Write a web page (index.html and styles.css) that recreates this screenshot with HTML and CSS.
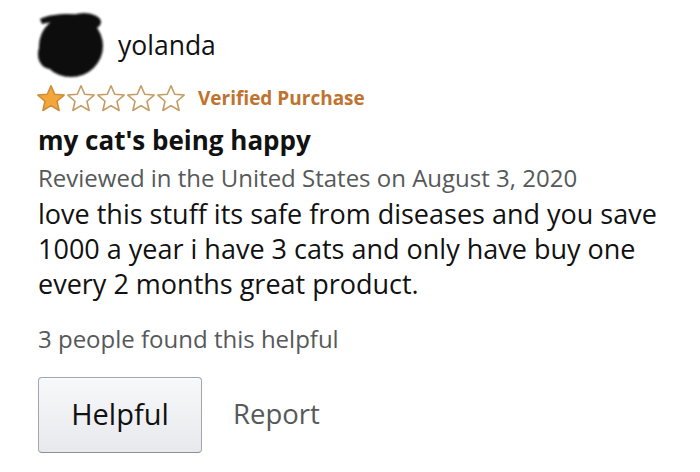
FILE: index.html
```html
<!DOCTYPE html>
<html>
<head>
<meta charset="utf-8">
<link rel="stylesheet" href="styles.css">
</head>
<body>
<div class="review">
  <div class="header">
    <svg class="avatar" width="72" height="70" viewBox="0 0 72 70">
      <defs><filter id="soft" x="-10%" y="-10%" width="120%" height="120%"><feGaussianBlur stdDeviation="1.3"/></filter></defs>
      <g fill="#0a0a0a" filter="url(#soft)">
        <ellipse cx="37" cy="36" rx="32" ry="31"/>
        <ellipse cx="50" cy="12" rx="17" ry="9"/>
        <ellipse cx="16" cy="44" rx="12" ry="15"/>
        <path d="M6 9 C18 3 40 3 58 6 L58 12 C40 10 20 11 8 14 Z"/>
      </g>
    </svg>
    <span class="name">yolanda</span>
  </div>
  <div class="rating">
    <div class="stars">
      <svg class="star" viewBox="0 0 30 27" width="30" height="27"><path class="full" d="M15 0.8 L18.7 9.2 L28.12 10.04 L20.99 16.25 L23.11 25.46 L15 20.6 L6.89 25.46 L9.01 16.25 L1.88 10.04 L11.3 9.2 Z"/></svg>
      <svg class="star" viewBox="0 0 30 27" width="30" height="27"><path class="empty" d="M15 0.8 L18.7 9.2 L28.12 10.04 L20.99 16.25 L23.11 25.46 L15 20.6 L6.89 25.46 L9.01 16.25 L1.88 10.04 L11.3 9.2 Z"/></svg>
      <svg class="star" viewBox="0 0 30 27" width="30" height="27"><path class="empty" d="M15 0.8 L18.7 9.2 L28.12 10.04 L20.99 16.25 L23.11 25.46 L15 20.6 L6.89 25.46 L9.01 16.25 L1.88 10.04 L11.3 9.2 Z"/></svg>
      <svg class="star" viewBox="0 0 30 27" width="30" height="27"><path class="empty" d="M15 0.8 L18.7 9.2 L28.12 10.04 L20.99 16.25 L23.11 25.46 L15 20.6 L6.89 25.46 L9.01 16.25 L1.88 10.04 L11.3 9.2 Z"/></svg>
      <svg class="star" viewBox="0 0 30 27" width="30" height="27"><path class="empty" d="M15 0.8 L18.7 9.2 L28.12 10.04 L20.99 16.25 L23.11 25.46 L15 20.6 L6.89 25.46 L9.01 16.25 L1.88 10.04 L11.3 9.2 Z"/></svg>
    </div>
    <span class="verified">Verified Purchase</span>
  </div>
  <h1 class="title">my cat's being happy</h1>
  <p class="meta">Reviewed in the United States on August 3, 2020</p>
  <p class="body">love this stuff its safe from diseases and you save 1000 a year i have 3 cats and only have buy one every 2 months great product.</p>
  <p class="count">3 people found this helpful</p>
  <div class="actions">
    <button class="helpful">Helpful</button>
    <span class="report">Report</span>
  </div>
</div>
</body>
</html>
```
FILE: styles.css
```css
html, body {
  margin: 0;
  padding: 0;
  background: #ffffff;
}
body {
  font-family: "Open Sans", "Noto Sans", sans-serif;
  color: #111111;
}
.review {
  width: 700px;
  height: 472px;
  padding-left: 38px;
  box-sizing: border-box;
  display: flex;
  flex-direction: column;
  align-items: flex-start;
}
.header {
  display: flex;
  align-items: flex-start;
  margin-top: 10px;
  margin-left: -4px;
  height: 75px;
}
.avatar {
  display: block;
}
.name {
  font-size: 26.5px;
  line-height: 32px;
  margin-top: 19px;
  margin-left: 12px;
  color: #111;
}
.rating {
  display: flex;
  align-items: center;
  height: 26px;
  margin-left: -2px;
}
.stars {
  display: flex;
  width: 152px;
}
.star {
  display: block;
}
.star .full {
  fill: #f3a73b;
  stroke: #cf8d3a;
  stroke-width: 1.6;
  stroke-linejoin: round;
}
.star .empty {
  fill: #ffffff;
  stroke: #c49c63;
  stroke-width: 1.6;
  stroke-linejoin: round;
}
.verified {
  font-size: 19px;
  font-weight: 700;
  line-height: 24px;
  color: #c0722f;
  margin-left: 10px;
}
.title {
  margin: 14px 0 0 0;
  font-size: 26px;
  line-height: 30px;
  font-weight: 700;
  color: #111;
}
.meta {
  margin: 8px 0 0 0;
  font-size: 24px;
  line-height: 30px;
  color: #565959;
}
.body {
  margin: 3px 0 0 0;
  width: 640px;
  font-size: 27px;
  line-height: 35px;
  color: #111;
}
.count {
  margin: 24px 0 0 0;
  font-size: 24px;
  line-height: 28px;
  color: #565959;
}
.actions {
  display: flex;
  align-items: center;
  margin-top: 24px;
}
.helpful {
  width: 164px;
  height: 76px;
  box-sizing: border-box;
  border: 1px solid #a2a6ac;
  border-bottom-color: #8d9096;
  border-radius: 4px;
  background: linear-gradient(#f7f8fa, #e7e9ec);
  font-family: "Open Sans", "Noto Sans", sans-serif;
  font-size: 29px;
  line-height: 35px;
  color: #111;
  padding: 0 0 4px 0;
  box-shadow: 0 1px 0 rgba(255,255,255,0.6) inset;
}
.report {
  margin-left: 31px;
  font-size: 27.5px;
  line-height: 35px;
  color: #565959;
  padding-bottom: 4px;
}
```
